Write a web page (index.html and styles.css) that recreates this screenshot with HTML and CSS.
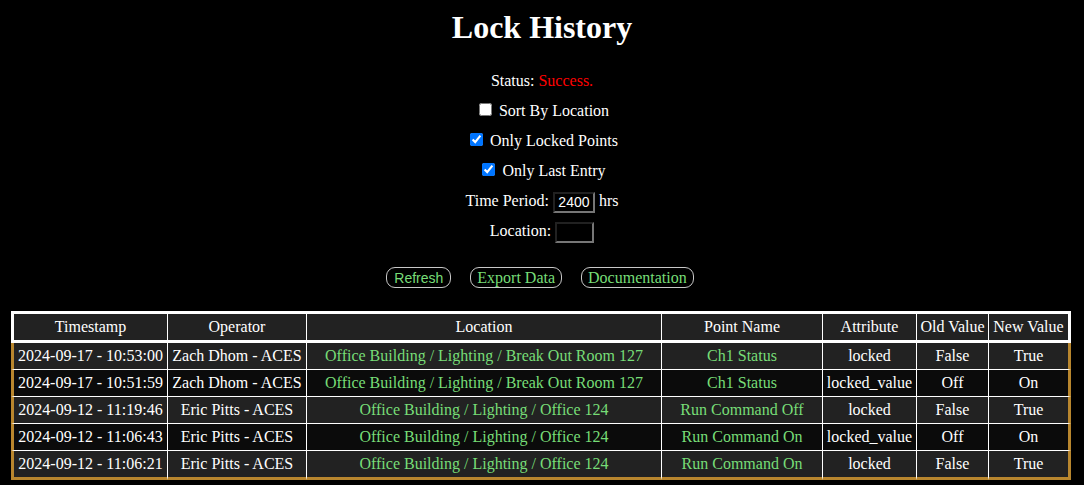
FILE: index.html
```html
<!DOCTYPE html>
<html lang="en">
<head>
<meta charset="utf-8">
<title>Lock History</title>
<link rel="stylesheet" href="styles.css">
</head>
<body>
<main class="page">
  <h1 class="title">Lock History</h1>
  <section class="controls">
    <div class="row">Status: <span class="status-ok">Success.</span></div>
    <div class="row"><input type="checkbox" id="sort"> <label for="sort">Sort By Location</label></div>
    <div class="row"><input type="checkbox" id="locked" checked> <label for="locked">Only Locked Points</label></div>
    <div class="row"><input type="checkbox" id="last" checked> <label for="last">Only Last Entry</label></div>
    <div class="row"><label for="period">Time Period:</label> <input type="text" id="period" class="field field-period" value="2400"> hrs</div>
    <div class="row"><label for="loc">Location:</label> <input type="text" id="loc" class="field field-loc" value=""></div>
  </section>
  <div class="actions">
    <button class="btn btn-sans">Refresh</button>
    <button class="btn">Export Data</button>
    <button class="btn">Documentation</button>
  </div>
  <table class="history">
    <thead>
      <tr>
        <th class="c1">Timestamp</th>
        <th class="c2">Operator</th>
        <th class="c3">Location</th>
        <th class="c4">Point Name</th>
        <th class="c5">Attribute</th>
        <th class="c6">Old Value</th>
        <th class="c7">New Value</th>
      </tr>
    </thead>
    <tbody>
      <tr>
        <td>2024-09-17 - 10:53:00</td><td>Zach Dhom - ACES</td>
        <td class="green">Office Building / Lighting / Break Out Room 127</td>
        <td class="green">Ch1 Status</td><td>locked</td><td>False</td><td>True</td>
      </tr>
      <tr>
        <td>2024-09-17 - 10:51:59</td><td>Zach Dhom - ACES</td>
        <td class="green">Office Building / Lighting / Break Out Room 127</td>
        <td class="green">Ch1 Status</td><td>locked_value</td><td>Off</td><td>On</td>
      </tr>
      <tr>
        <td>2024-09-12 - 11:19:46</td><td>Eric Pitts - ACES</td>
        <td class="green">Office Building / Lighting / Office 124</td>
        <td class="green">Run Command Off</td><td>locked</td><td>False</td><td>True</td>
      </tr>
      <tr>
        <td>2024-09-12 - 11:06:43</td><td>Eric Pitts - ACES</td>
        <td class="green">Office Building / Lighting / Office 124</td>
        <td class="green">Run Command On</td><td>locked_value</td><td>Off</td><td>On</td>
      </tr>
      <tr>
        <td>2024-09-12 - 11:06:21</td><td>Eric Pitts - ACES</td>
        <td class="green">Office Building / Lighting / Office 124</td>
        <td class="green">Run Command On</td><td>locked</td><td>False</td><td>True</td>
      </tr>
    </tbody>
  </table>
</main>
</body>
</html>
```
FILE: styles.css
```css
html, body {
  margin: 0;
  padding: 0;
  background: #000;
}
body {
  color: #fff;
  font-family: "Liberation Serif", "Times New Roman", serif;
  font-size: 16px;
}
.page {
  display: flex;
  flex-direction: column;
}
.title {
  margin: 9px 0 0;
  font-size: 32px;
  font-weight: bold;
  text-align: center;
  line-height: 37px;
}
.controls {
  margin-top: 20px;
  display: flex;
  flex-direction: column;
}
.row {
  height: 30px;
  line-height: 30px;
  text-align: center;
  white-space: nowrap;
}
.status-ok {
  color: #ff0000;
}
.row input[type="checkbox"] {
  margin: 3px 3px 3px 4px;
  width: 13px;
  height: 13px;
}
.field {
  background: #000;
  color: #fff;
  border: 2px inset #767676;
  padding: 1px 2px;
  font-family: "Liberation Sans", Arial, sans-serif;
  font-size: 14px;
  text-align: center;
  height: 21px;
  box-sizing: border-box;
  vertical-align: middle;
}
.field-period { width: 42px; }
.field-loc { width: 39px; }
.actions {
  margin-top: 21px;
  display: flex;
  justify-content: center;
  gap: 19px;
  padding-right: 4px;
}
.btn {
  height: 21px;
  box-sizing: border-box;
  padding: 0 6px;
  background: #000;
  color: #77dd77;
  border: 1px solid #c8c8c8;
  border-radius: 9px;
  font-family: "Liberation Serif", "Times New Roman", serif;
  font-size: 16px;
  line-height: 18px;
  cursor: pointer;
}
.btn-sans {
  font-family: "Liberation Sans", Arial, sans-serif;
  font-size: 14px;
  padding: 0 7px;
}
.history {
  margin: 23px 0 0 11px;
  width: 1060px;
  table-layout: fixed;
  border-collapse: separate;
  border-spacing: 0;
}
.history th, .history td {
  box-sizing: border-box;
  padding: 4px 3px;
  line-height: 18px;
  font-weight: normal;
  text-align: center;
  white-space: nowrap;
  overflow: hidden;
  border-right: 1px solid #fff;
}
.history th {
  background: #222;
  color: #fff;
  border-top: 3px solid #fff;
  border-bottom: 3px solid #fff;
}
.history th:first-child { border-left: 3px solid #fff; }
.history th:last-child { border-right: 3px solid #fff; }
.history td {
  border-bottom: 1px solid #fff;
}
.history td:first-child { border-left: 3px solid #b8862e; }
.history td:last-child { border-right: 3px solid #b8862e; }
.history tbody tr:last-child td { border-bottom: 3px solid #b8862e; }
.history tbody tr:nth-child(odd) td { background: #222; }
.history tbody tr:nth-child(even) td { background: #0b0b0b; }
.history .green { color: #77dd77; }
.c1 { width: 157px; }
.c2 { width: 139px; }
.c3 { width: 355px; }
.c4 { width: 161px; }
.c5 { width: 94px; }
.c6 { width: 72px; }
.c7 { width: 82px; }
```
